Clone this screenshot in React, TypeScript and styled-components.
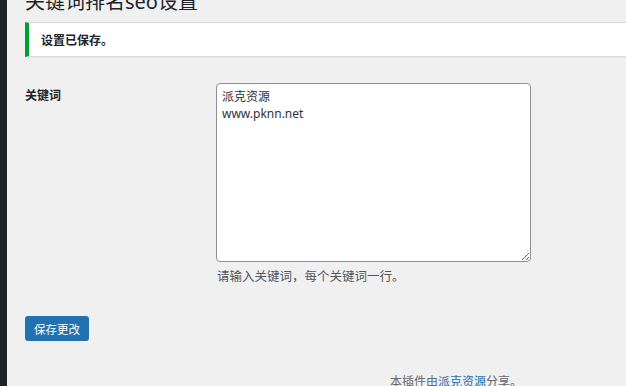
import React from "react";
import styled, { createGlobalStyle } from "styled-components";

const Global = createGlobalStyle`
  html, body { margin: 0; padding: 0; background: #f0f0f1; overflow: hidden; }
  body { font-family: "Noto Sans", "Noto Sans CJK SC", sans-serif; color: #1d2327; }
`;

const Page = styled.div`
  display: flex;
  min-height: 386px;
  width: 626px;
  overflow: hidden;
`;

const Sidebar = styled.div`
  width: 7px;
  flex: none;
  background: #1d2327;
`;

const Main = styled.div`
  flex: 1;
  padding-left: 18px;
  display: flex;
  flex-direction: column;
`;

const Title = styled.h1`
  margin: -11px 0 0;
  font-size: 20px;
  line-height: 26px;
  font-weight: 400;
  color: #1d2327;
`;

const Notice = styled.div`
  margin-top: 7px;
  height: 35px;
  box-sizing: border-box;
  background: #fff;
  border-left: 4px solid #00a32a;
  border-top: 1px solid #dcdcde;
  border-bottom: 1px solid #dcdcde;
  box-shadow: 0 1px 1px rgba(0, 0, 0, 0.04);
  display: flex;
  align-items: center;
  padding-left: 12px;
  font-size: 12px;
  font-weight: 700;
`;

const FormRow = styled.div`
  margin-top: 26px;
  display: grid;
  grid-template-columns: 191px auto;
`;

const Label = styled.div`
  padding-top: 4px;
  font-size: 12px;
  line-height: 17px;
  font-weight: 700;
`;

const Field = styled.div`
  display: flex;
  flex-direction: column;
`;

const TextArea = styled.textarea`
  width: 315px;
  height: 179px;
  box-sizing: border-box;
  border: 1px solid #8c8f94;
  border-radius: 4px;
  background: #fff;
  padding: 4px 5px;
  font-family: "Noto Sans", "Noto Sans CJK SC", sans-serif;
  font-size: 12px;
  line-height: 17px;
  color: #2c3338;
  margin: 0;
  outline: none;
`;

const Description = styled.p`
  margin: 6px 0 0 1px;
  font-size: 12.5px;
  line-height: 17px;
  color: #50575e;
`;

const Button = styled.button`
  margin-top: 31px;
  align-self: flex-start;
  width: 64px;
  height: 25px;
  border: none;
  border-radius: 3px;
  background: #2271b1;
  color: #fff;
  font-family: "Noto Sans", "Noto Sans CJK SC", sans-serif;
  font-size: 11.5px;
  padding: 0;
  cursor: pointer;
`;

const Footer = styled.p`
  margin: 32px 0 0 365px;
  font-size: 12px;
  line-height: 17px;
  color: #646970;
  white-space: nowrap;
`;

const Link = styled.a`
  color: #2271b1;
  text-decoration: none;
`;

export default function App() {
  return (
    <>
      <Global />
      <Page>
        <Sidebar />
        <Main>
          <Title>关键词排名seo设置</Title>
          <Notice>设置已保存。</Notice>
          <FormRow>
            <Label>关键词</Label>
            <Field>
              <TextArea defaultValue={"派克资源\nwww.pknn.net"} />
              <Description>请输入关键词，每个关键词一行。</Description>
            </Field>
          </FormRow>
          <Button>保存更改</Button>
          <Footer>
            本插件由<Link href="#">派克资源</Link>分享。
          </Footer>
        </Main>
      </Page>
    </>
  );
}
